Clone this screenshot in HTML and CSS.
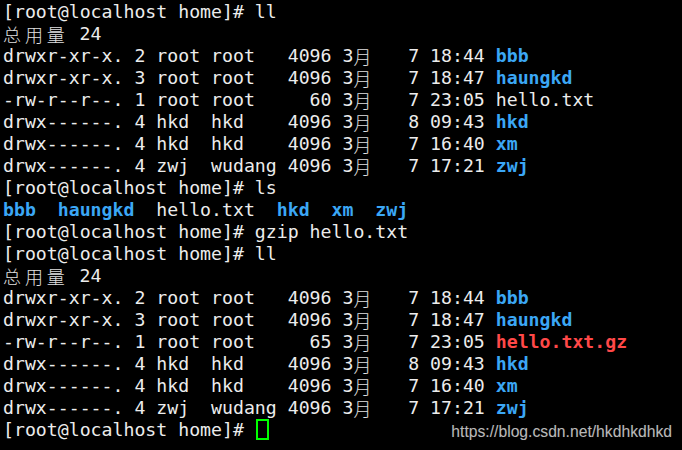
FILE: index.html
```html
<!DOCTYPE html>
<html>
<head>
<meta charset="utf-8">
<link rel="stylesheet" href="styles.css">
</head>
<body>
<div class="term">
<pre class="screen">[root@localhost home]# ll
<span class="cjk">总</span><span class="cjk">用</span><span class="cjk">量</span> 24
drwxr-xr-x. 2 root root   4096 3<span class="cjk">月</span>   7 18:44 <b class="dir">bbb</b>
drwxr-xr-x. 3 root root   4096 3<span class="cjk">月</span>   7 18:47 <b class="dir">haungkd</b>
-rw-r--r--. 1 root root     60 3<span class="cjk">月</span>   7 23:05 hello.txt
drwx------. 4 hkd  hkd    4096 3<span class="cjk">月</span>   8 09:43 <b class="dir">hkd</b>
drwx------. 4 hkd  hkd    4096 3<span class="cjk">月</span>   7 16:40 <b class="dir">xm</b>
drwx------. 4 zwj  wudang 4096 3<span class="cjk">月</span>   7 17:21 <b class="dir">zwj</b>
[root@localhost home]# ls
<b class="dir">bbb</b>  <b class="dir">haungkd</b>  hello.txt  <b class="dir">hkd</b>  <b class="dir">xm</b>  <b class="dir">zwj</b>
[root@localhost home]# gzip hello.txt
[root@localhost home]# ll
<span class="cjk">总</span><span class="cjk">用</span><span class="cjk">量</span> 24
drwxr-xr-x. 2 root root   4096 3<span class="cjk">月</span>   7 18:44 <b class="dir">bbb</b>
drwxr-xr-x. 3 root root   4096 3<span class="cjk">月</span>   7 18:47 <b class="dir">haungkd</b>
-rw-r--r--. 1 root root     65 3<span class="cjk">月</span>   7 23:05 <b class="gz">hello.txt.gz</b>
drwx------. 4 hkd  hkd    4096 3<span class="cjk">月</span>   8 09:43 <b class="dir">hkd</b>
drwx------. 4 hkd  hkd    4096 3<span class="cjk">月</span>   7 16:40 <b class="dir">xm</b>
drwx------. 4 zwj  wudang 4096 3<span class="cjk">月</span>   7 17:21 <b class="dir">zwj</b>
[root@localhost home]# <span class="cursor"></span></pre>
<div class="watermark">https://blog.csdn.net/hkdhkdhkd</div>
</div>
</body>
</html>
```
FILE: styles.css
```css
html, body {
  margin: 0;
  padding: 0;
  background: #000;
}
.term {
  position: relative;
  width: 682px;
  height: 450px;
  overflow: hidden;
  background: #000;
}
.screen {
  margin: 0;
  padding: 1px 0 0 3px;
  font-family: "DejaVu Sans Mono", monospace;
  font-size: 18.2px;
  line-height: 22px;
  color: #ececec;
  white-space: pre;
}
.cjk {
  display: inline-block;
  width: 21.9px;
  font-family: "Noto Sans CJK SC", sans-serif;
  font-size: 18px;
  font-weight: 300;
  color: #e0e0e0;
  line-height: 22px;
  vertical-align: top;
  text-align: left;
}
.dir {
  color: #3ba7f5;
  font-weight: bold;
}
.gz {
  color: #ff4848;
  font-weight: bold;
}
.cursor {
  display: inline-block;
  width: 9px;
  height: 17px;
  border: 2px solid #00ff00;
  vertical-align: top;
  margin-top: 0;
  margin-left: 1px;
}
.watermark {
  position: absolute;
  right: 10px;
  bottom: 9px;
  font-family: "Liberation Sans", Arial, sans-serif;
  font-size: 15.7px;
  color: #b8b8b8;
  text-shadow: 0 0 1px #222;
}
```
